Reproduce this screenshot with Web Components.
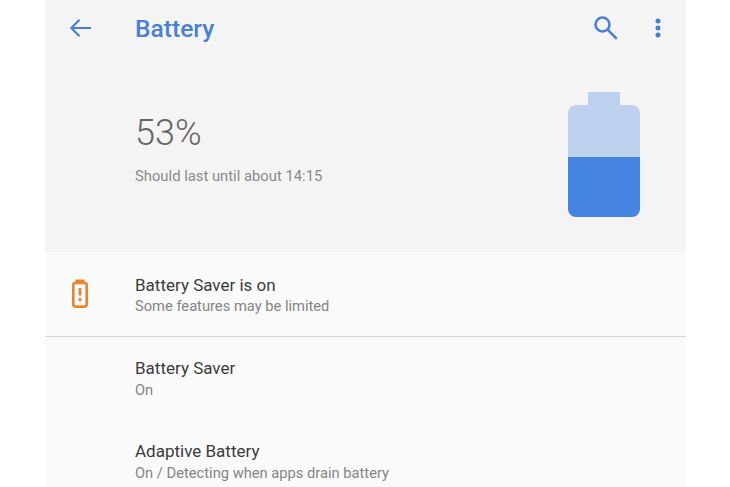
<!DOCTYPE html>
<html>
<head>
<meta charset="utf-8">
<title>Battery</title>
<style>
    html, body { margin: 0; height: 100%; background: #fff; overflow: hidden; }
    body { font-family: Roboto, "Liberation Sans", sans-serif; }
</style>
</head>
<body>
<settings-screen>
    <app-bar title="Battery"></app-bar>
    <battery-header level="53%" note="Should last until about 14:15"></battery-header>
    <settings-row class="tip" primary="Battery Saver is on" secondary="Some features may be limited">
        <svg slot="icon" width="20" height="30" viewBox="0 0 20 30" fill="none" stroke="#e98432">
            <path d="M6.5 3.5V1.8h7v1.7" stroke-width="2.4"/>
            <rect x="3.3" y="4" width="13.4" height="23.6" rx="2" stroke-width="2.6"/>
            <path d="M10 9v7.5" stroke-width="2.8"/>
            <path d="M10 19v3" stroke-width="2.8"/>
        </svg>
    </settings-row>
    <settings-row primary="Battery Saver" secondary="On"></settings-row>
    <settings-row primary="Adaptive Battery" secondary="On / Detecting when apps drain battery"></settings-row>
</settings-screen>

<script>
// The phone screen: a column in the middle of the white page.
class SettingsScreen extends HTMLElement {
    constructor() {
        super();
        this.attachShadow({ mode: 'open' });
        this.shadowRoot.innerHTML = `
            <style>
                :host {
                    display: flex;
                    flex-direction: column;
                    width: 641px;
                    height: 487px;
                    margin-left: 45px;
                    background: #fafafa;
                    overflow: hidden;
                }
            </style>
            <slot></slot>
        `;
    }
}

class AppBar extends HTMLElement {
    constructor() {
        super();
        this.attachShadow({ mode: 'open' });
    }

    connectedCallback() {
        this.shadowRoot.innerHTML = `
            <style>
                :host {
                    display: flex;
                    flex: none;
                    align-items: center;
                    height: 56px;
                    background: #f4f4f4;
                    color: #4a80d4;
                }
                .nav {
                    display: flex;
                    justify-content: center;
                    width: 70px;
                    flex: none;
                    margin-right: 20px;
                }
                h1 {
                    flex: 1;
                    margin: 0;
                    font: 500 24.6px Roboto, sans-serif;
                }
                .actions {
                    display: flex;
                    align-items: center;
                    gap: 37px;
                    padding-right: 25px;
                }
                svg { display: block; }
            </style>
            <div class="nav">
                <svg width="24" height="24" viewBox="0 0 24 24" fill="none" stroke="#4a80d4" stroke-width="2.2">
                    <path d="M23 12H3.5M11.5 3.8 3.4 12l8.1 8.2"/>
                </svg>
            </div>
            <h1>${this.getAttribute('title')}</h1>
            <div class="actions">
                <svg width="24" height="24" viewBox="0 0 24 24" fill="none" stroke="#4a80d4" stroke-width="2.6">
                    <circle cx="8.5" cy="8.5" r="7"/>
                    <path d="m13.6 13.6 9.2 9.2"/>
                </svg>
                <svg width="6" height="24" viewBox="0 0 6 24" fill="#4a80d4">
                    <circle cx="3" cy="5" r="2.5"/>
                    <circle cx="3" cy="12" r="2.5"/>
                    <circle cx="3" cy="19" r="2.5"/>
                </svg>
            </div>
        `;
    }
}

class BatteryHeader extends HTMLElement {
    constructor() {
        super();
        this.attachShadow({ mode: 'open' });
    }

    connectedCallback() {
        this.shadowRoot.innerHTML = `
            <style>
                :host {
                    display: flex;
                    flex: none;
                    justify-content: space-between;
                    height: 196px;
                    padding: 36px 46px 0 90px;
                    box-sizing: border-box;
                    background: #f4f4f4;
                }
                .level {
                    margin-top: 19px;
                    font: 300 36px/44px Roboto, sans-serif;
                    color: #666;
                }
                .note {
                    margin-top: 12px;
                    font: 400 14.8px/18px Roboto, sans-serif;
                    color: #8a8a8a;
                }
                svg { display: block; }
            </style>
            <div>
                <div class="level">${this.getAttribute('level')}</div>
                <div class="note">${this.getAttribute('note')}</div>
            </div>
            <svg width="72" height="125" viewBox="0 0 72 125">
                <path d="M20 13V0h32v13h12a8 8 0 0 1 8 8v45H0V21a8 8 0 0 1 8-8z" fill="#bdd0ed"/>
                <path d="M0 65h72v52a8 8 0 0 1-8 8H8a8 8 0 0 1-8-8z" fill="#4684e3"/>
            </svg>
        `;
    }
}

// One line of the list. The tip row has a divider and a leading icon.
class SettingsRow extends HTMLElement {
    constructor() {
        super();
        this.attachShadow({ mode: 'open' });
    }

    connectedCallback() {
        this.shadowRoot.innerHTML = `
            <style>
                :host {
                    display: flex;
                    align-items: center;
                    height: 83px;
                    flex: none;
                    box-sizing: border-box;
                    background: #fafafa;
                }
                :host(.tip) {
                    height: 85px;
                    padding-top: 2px;
                    border-bottom: 1px solid #d6d6d6;
                }
                .icon {
                    display: flex;
                    justify-content: center;
                    width: 70px;
                    margin-right: 20px;
                    flex: none;
                }
                .primary {
                    font: 400 17px/22px Roboto, sans-serif;
                    color: #3c3c3c;
                }
                .secondary {
                    margin-top: 1px;
                    font: 400 14.7px/20px Roboto, sans-serif;
                    color: #858585;
                }
                :host(.tip) .secondary { margin-top: 0; }
                :host(.tip) .icon { margin-top: -2px; }
            </style>
            <div class="icon"><slot name="icon"></slot></div>
            <div>
                <div class="primary">${this.getAttribute('primary')}</div>
                <div class="secondary">${this.getAttribute('secondary')}</div>
            </div>
        `;
    }
}

customElements.define('settings-screen', SettingsScreen);
customElements.define('app-bar', AppBar);
customElements.define('battery-header', BatteryHeader);
customElements.define('settings-row', SettingsRow);
</script>
</body>
</html>
